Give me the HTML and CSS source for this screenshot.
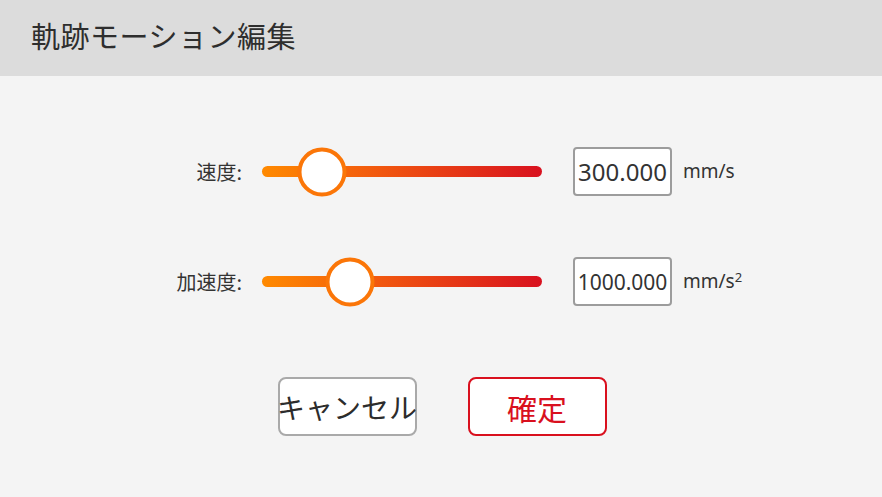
FILE: index.html
```html
<!DOCTYPE html>
<html lang="ja">
<head>
<meta charset="utf-8">
<link rel="stylesheet" href="styles.css">
</head>
<body>
<div class="dialog">
  <header class="header"><h1 class="title">軌跡モーション編集</h1></header>
  <main class="content">
    <div class="rows">
      <div class="row">
        <div class="label">速度:</div>
        <div class="slider">
          <div class="track"></div>
          <div class="thumb" style="left: 21.5%"></div>
        </div>
        <div class="value">300.000</div>
        <div class="unit">mm/s</div>
      </div>
      <div class="row">
        <div class="label">加速度:</div>
        <div class="slider">
          <div class="track"></div>
          <div class="thumb" style="left: 31.5%"></div>
        </div>
        <div class="value value-small">1000.000</div>
        <div class="unit">mm/s<sup class="sup">2</sup></div>
      </div>
    </div>
    <div class="buttons">
      <button class="btn btn-cancel">キャンセル</button>
      <button class="btn btn-ok">確定</button>
    </div>
  </main>
</div>
</body>
</html>
```
FILE: styles.css
```css
* { box-sizing: border-box; }
html, body {
  margin: 0;
  padding: 0;
  width: 882px;
  height: 497px;
  overflow: hidden;
}
body {
  font-family: "Noto Sans", "Noto Sans CJK JP", sans-serif;
  color: #333;
  background: #f4f4f4;
}
.dialog {
  display: flex;
  flex-direction: column;
  height: 497px;
}
.header {
  height: 76px;
  background: #dcdcdc;
  display: flex;
  align-items: center;
  padding-left: 31px;
}
.title {
  margin: 0;
  font-family: "Noto Sans CJK JP", sans-serif;
  font-weight: 400;
  font-size: 29px;
  letter-spacing: 0.5px;
  color: #2e2e2e;
  line-height: 1;
  padding-bottom: 5px;
}
.content {
  flex: 1;
  display: flex;
  flex-direction: column;
  padding-top: 71px;
}
.rows {
  display: flex;
  flex-direction: column;
  gap: 61px;
}
.row {
  display: flex;
  align-items: center;
  height: 49px;
}
.label {
  width: 242px;
  text-align: right;
  font-family: "Noto Sans CJK JP", sans-serif;
  font-size: 20px;
  color: #333;
}
.slider {
  position: relative;
  width: 280px;
  height: 11px;
  margin-left: 20px;
}
.track {
  height: 11px;
  border-radius: 6px;
  background: linear-gradient(to right, #ff8a00, #f25a0e 40%, #d8111f);
}
.thumb {
  position: absolute;
  top: 50%;
  width: 49px;
  height: 49px;
  border-radius: 50%;
  background: #fff;
  border: 4px solid #fb7608;
  transform: translate(-50%, -50%);
}
.value {
  width: 99px;
  height: 49px;
  margin-left: 31px;
  border: 2px solid #9c9c9c;
  border-radius: 4px;
  background: #fff;
  display: flex;
  align-items: center;
  justify-content: center;
  font-size: 24px;
  color: #333;
  white-space: nowrap;
}
.value-small {
  font-size: 21px;
}
.unit {
  margin-left: 11px;
  font-size: 19px;
  color: #333;
  padding-bottom: 2px;
}
.sup {
  font-size: 13px;
  vertical-align: 6px;
  line-height: 0;
}
.buttons {
  display: flex;
  justify-content: center;
  gap: 51px;
  margin-top: 71px;
  padding-left: 2px;
}
.btn {
  width: 139px;
  height: 59px;
  border-radius: 8px;
  background: #fff;
  font-family: "Noto Sans CJK JP", sans-serif;
  font-size: 28px;
  padding: 0;
  display: flex;
  align-items: center;
  justify-content: center;
  white-space: nowrap;
  overflow: visible;
}
.btn-cancel {
  border: 2px solid #a9a9a9;
  color: #2c2c2c;
}
.btn-ok {
  border: 2px solid #d9101e;
  color: #d9101e;
  font-size: 30px;
}
```
